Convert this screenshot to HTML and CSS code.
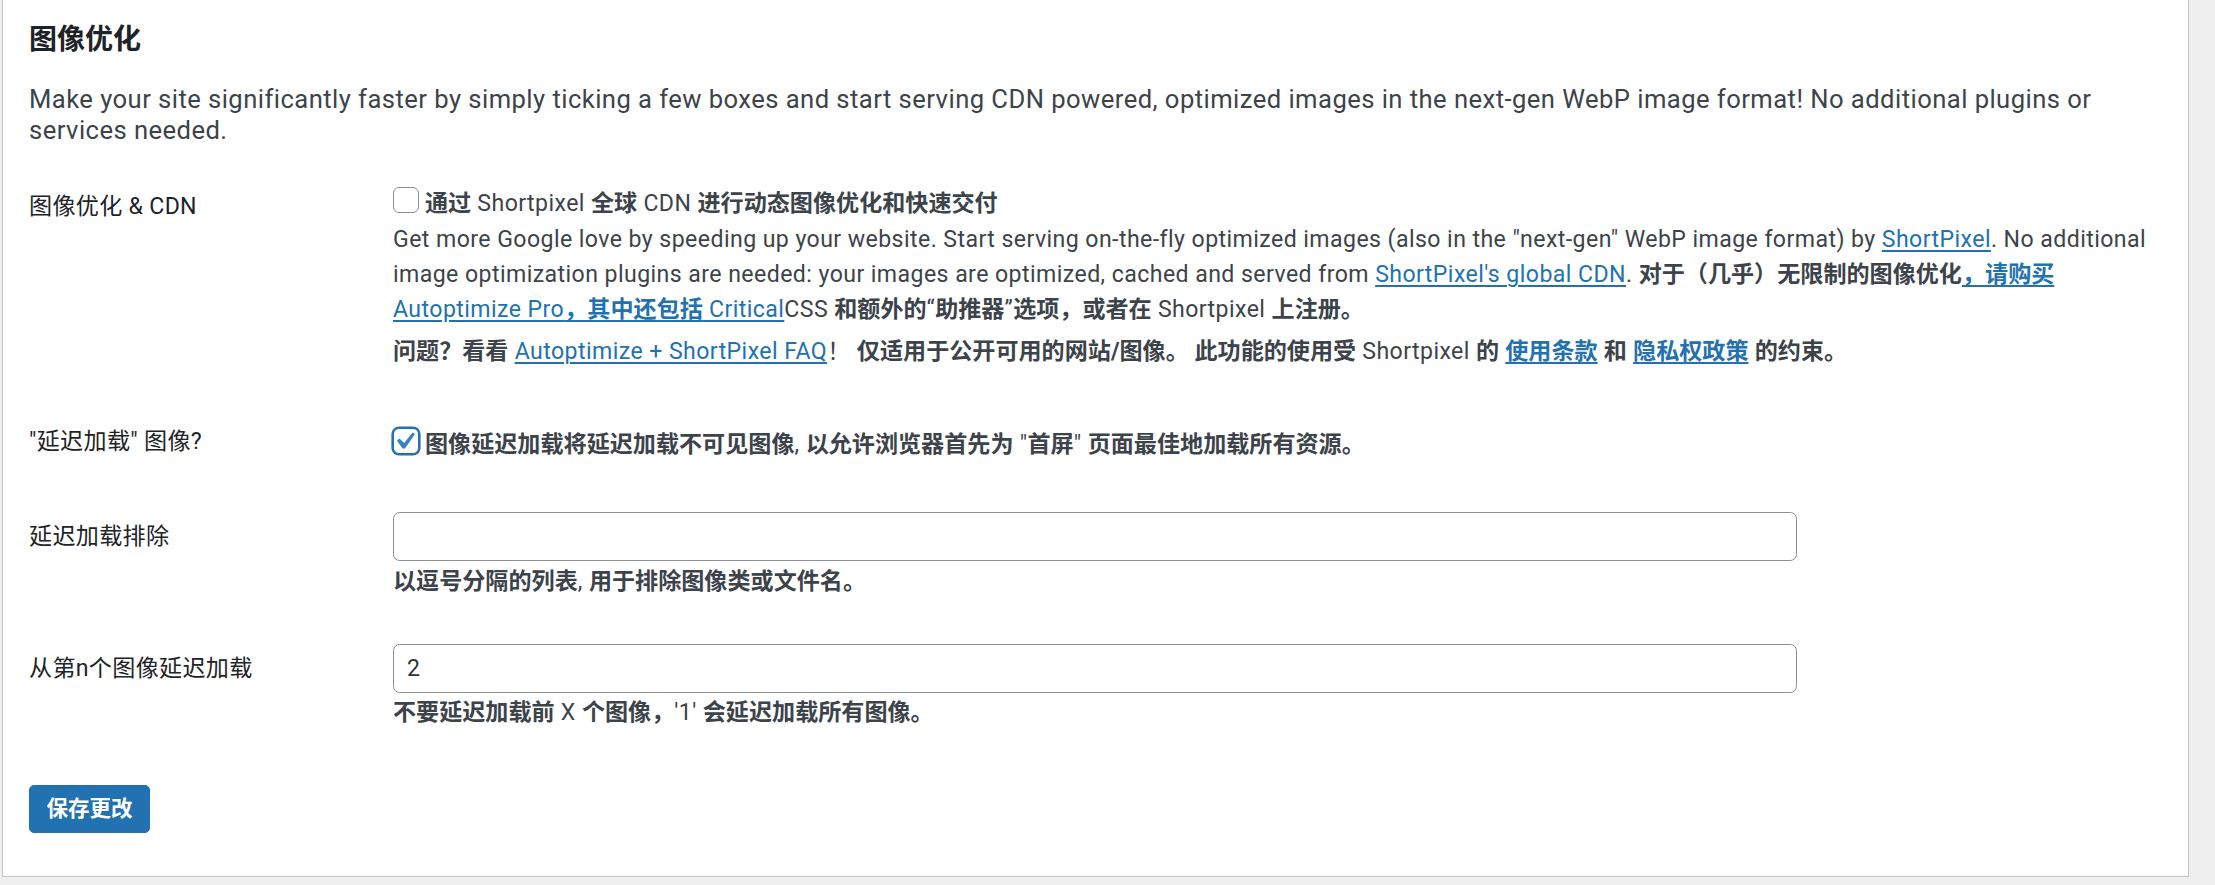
FILE: index.html
```html
<!DOCTYPE html>
<html lang="zh-CN">
<head>
<meta charset="utf-8">
<title>图像优化</title>
<link rel="stylesheet" href="styles.css">
</head>
<body>
<div class="panel">
  <h2 class="title">图像优化</h2>
  <p class="intro">Make your site significantly faster by simply ticking a few boxes and start serving CDN powered, optimized images in the next-gen WebP image format! No additional plugins or<br>services needed.</p>
  <div class="form">
    <div class="row row-cdn">
      <div class="label">图像优化 &amp; CDN</div>
      <div class="field">
        <label class="check check-cdn"><span class="cb-wrap"><input type="checkbox" class="cb"></span><span class="check-text"><span class="b">通过</span> Shortpixel <span class="b">全球</span> CDN <span class="b">进行动态图像优化和快速交付</span></span></label>
        <p class="para para-first">Get more Google love by speeding up your website. Start serving on-the-fly optimized images (also in the "next-gen" WebP image format) by <a href="#">ShortPixel</a>. No additional<br>image optimization plugins are needed: your images are optimized, cached and served from <a href="#">ShortPixel's global CDN</a>. <span class="b">对于（几乎）无限制的图像优化</span><a href="#"><span class="b">，请购买</span><br>Autoptimize Pro<span class="b">，其中还包括</span> Critical</a>CSS <span class="b">和额外的</span>“<span class="b">助推器</span>”<span class="b">选项，或者在</span> Shortpixel <span class="b">上注册。</span></p>
        <p class="para para-second"><span class="b">问题？看看</span> <a href="#">Autoptimize + ShortPixel FAQ</a>！ <span class="b">仅适用于公开可用的网站/图像。 此功能的使用受</span> Shortpixel <span class="b">的</span> <a href="#" class="b">使用条款</a> <span class="b">和</span> <a href="#" class="b">隐私权政策</a> <span class="b">的约束。</span></p>
      </div>
    </div>
    <div class="row row-lazy">
      <div class="label">"延迟加载" 图像?</div>
      <div class="field">
        <label class="check check-lazy"><span class="cb-wrap"><input type="checkbox" class="cb cb-focus" checked><svg class="tick" viewBox="0 0 20 20"><path d="M14.83 4.89l1.34.94-5.81 8.38H9.02L5.78 9.67l1.34-1.25 2.78 2.59z"/></svg></span><span class="check-text"><span class="b">图像延迟加载将延迟加载不可见图像</span>, <span class="b">以允许浏览器首先为</span> "<span class="b">首屏</span>" <span class="b">页面最佳地加载所有资源。</span></span></label>
      </div>
    </div>
    <div class="row row-exclude">
      <div class="label">延迟加载排除</div>
      <div class="field">
        <input type="text" class="text-input" value="">
        <p class="desc"><span class="b">以逗号分隔的列表</span>, <span class="b">用于排除图像类或文件名。</span></p>
      </div>
    </div>
    <div class="row row-from">
      <div class="label">从第n个图像延迟加载</div>
      <div class="field">
        <input type="text" class="text-input" value="2">
        <p class="desc"><span class="b">不要延迟加载前</span> X <span class="b">个图像，</span>'1' <span class="b">会延迟加载所有图像。</span></p>
      </div>
    </div>
  </div>
  <div class="submit"><button type="button" class="save">保存更改</button></div>
</div>
</body>
</html>
```

FILE: styles.css
```css
* { box-sizing: border-box; }
html, body { margin: 0; padding: 0; }
body {
  background: #f0f0f1;
  font-family: Roboto, "Noto Sans CJK SC", sans-serif;
  font-size: 23.1px;
  color: #3c434a;
}
.panel {
  margin-left: 2px;
  width: 2187px;
  background: #fff;
  border: 1px solid #c3c4c7;
  border-top: 0;
  padding: 22px 26px 43px 26px;
}
.title {
  margin: 0;
  font-size: 28px;
  line-height: 36px;
  font-weight: 700;
  color: #1d2327;
}
.intro {
  margin: 25.5px 0 13px;
  font-size: 25.6px;
  line-height: 31px;
  letter-spacing: 0.45px;
}
.row {
  display: grid;
  grid-template-columns: 364px 1fr;
}
.label {
  padding: 33px 0;
  line-height: 30px;
  color: #1d2327;
  letter-spacing: 0.3px;
}
.field {
  padding: 24.75px 0;
  letter-spacing: 0.43px;
}
.b { font-weight: 700; letter-spacing: 0; }
a { color: #2271b1; text-decoration: underline; text-decoration-thickness: 2px; text-underline-offset: 3px; }
.check {
  display: flex;
  align-items: center;
  white-space: nowrap;
}
.check-cdn { height: 36px; }
.check-lazy { height: 46px; }
.cb-wrap {
  position: relative;
  display: inline-flex;
  flex: none;
  width: 26px;
  height: 26px;
  margin: -2px 6px 0 0;
}
.cb {
  appearance: none;
  -webkit-appearance: none;
  margin: 0;
  width: 26px;
  height: 26px;
  border: 1px solid #8c8f94;
  border-radius: 6px;
  background: #fff;
}
.cb-focus {
  border-color: #2271b1;
  box-shadow: 0 0 0 1.6px #2271b1;
}
.tick {
  position: absolute;
  left: -5.6px;
  top: -4px;
  width: 34.6px;
  height: 34.6px;
  fill: #3582c4;
}
.para {
  margin: 0;
  line-height: 35px;
  white-space: nowrap;
}
.para-first { margin-top: 3px; }
.para-second { margin-top: 6.75px; }
.row-exclude .label { padding-top: 32px; }
.row-exclude .field { padding: 22.5px 0 24px; }
.row-from .field { padding: 23.35px 0 24px; }
.text-input {
  display: block;
  width: 1404px;
  height: 49px;
  margin: 0;
  border: 1px solid #8c8f94;
  border-radius: 6.6px;
  padding: 0 13px;
  font-family: inherit;
  font-size: 23.1px;
  color: #2c3338;
  background: #fff;
}
.desc {
  margin: 5.5px 0 0;
  line-height: 30px;
}
.row-from .desc { margin-top: 5px; }
.submit { margin-top: 32.7px; }
.save {
  height: 48.5px;
  padding: 0 16.5px;
  background: #2271b1;
  border: 1px solid #2271b1;
  border-radius: 5px;
  color: #fff;
  font-family: inherit;
  font-size: 21.5px;
  font-weight: 700;
  line-height: 1;
}
```
